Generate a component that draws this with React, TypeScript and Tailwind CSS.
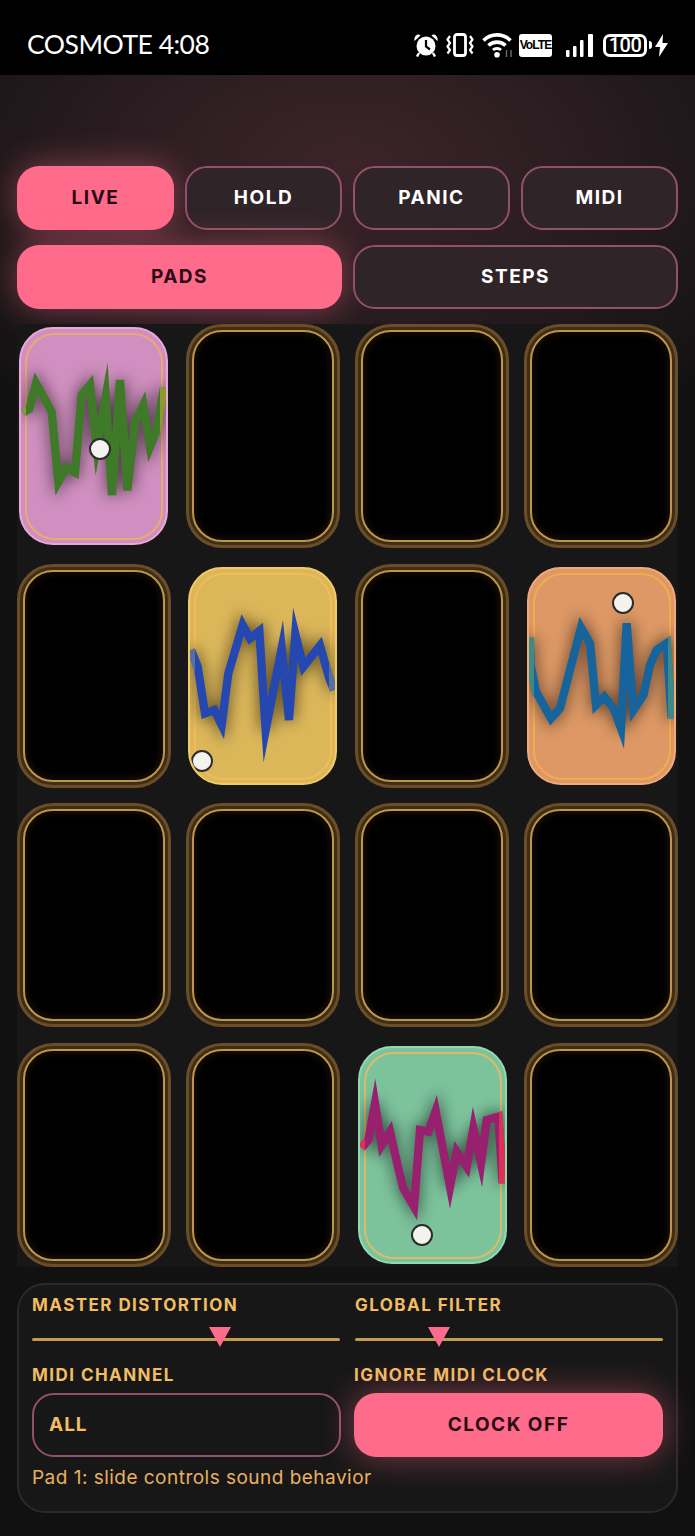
const PINK_GLOW = "shadow-[0_0_34px_rgba(255,107,138,0.45)]";
const LABEL = "text-[17px] leading-[22px] font-bold tracking-[0.085em] text-[#f2bd63]";

type Pad = {
  box: string;
  ring: string;
  wave: string;
  edge: string;
  viewX: number;
  viewY: number;
  points: string;
  knob: string;
};

const pads: Record<number, Pad> = {
  0: {
    box: "ml-[2px] bg-[#d08fc0] border-[#e8a8da]",
    ring: "border-[#eaab70]",
    wave: "#3f7a28",
    edge: "#8c9a30",
    viewX: 57,
    viewY: 36,
    points:
      "70,292 88,282 108,205 155,290 175,500 198,458 225,472 245,240 270,210 290,395 317,245 336,540 360,195 382,526 405,322 430,270 450,395 470,345 492,218",
    knob: "left-[68px] top-[109px]",
  },
  5: {
    box: "ml-[2px] bg-[#dcb75a] border-[#f2ca6a]",
    ring: "border-[#f2ba58]",
    wave: "#2448b0",
    edge: "#5a6ea0",
    viewX: 54,
    viewY: 36,
    points:
      "63,285 83,335 105,475 133,465 155,510 175,355 218,210 240,250 268,228 287,525 335,280 357,495 376,237 400,335 450,272 478,370 492,405",
    knob: "left-[1px] top-[181px]",
  },
  7: {
    box: "ml-[3px] bg-[#dd9865] border-[#f2aa7a]",
    ring: "border-[#f2ac50]",
    wave: "#17649c",
    edge: "#3f8a86",
    viewX: 51,
    viewY: 36,
    points:
      "60,248 62,330 78,410 123,490 150,460 213,218 240,265 258,450 283,425 312,462 333,520 350,205 370,465 400,420 420,330 440,285 470,265 485,490",
    knob: "left-[83px] top-[23px]",
  },
  14: {
    box: "ml-[3px] bg-[#7cc39c] border-[#92dab2]",
    ring: "border-[#dcbc6a]",
    wave: "#98206f",
    edge: "#e03055",
    viewX: 54,
    viewY: 33,
    points:
      "65,338 85,315 105,205 125,330 150,290 175,400 190,460 222,515 240,285 265,290 287,228 330,455 350,350 380,395 400,280 423,385 440,255 475,245 488,445",
    knob: "left-[51px] top-[176px]",
  },
};

function FilledPad({ pad, id }: { pad: Pad; id: string }) {
  return (
    <div className={`relative my-auto h-[218px] w-[149px] overflow-hidden rounded-[34px] border-2 ${pad.box}`}>
      <div className={`absolute top-[4px] right-[3px] bottom-[3px] left-[4px] rounded-[30px] border-2 ${pad.ring}`} />
      <svg className="absolute -left-[2px] -top-[2px] h-[218px] w-[149px]" viewBox={`${pad.viewX} ${pad.viewY} 447 654`}>
        <clipPath id={id}>
          <rect x={pad.viewX} y={pad.viewY} width="21" height="654" />
          <rect x={pad.viewX + 423} y={pad.viewY} width="24" height="654" />
        </clipPath>
        <polyline points={pad.points} fill="none" stroke="#000" strokeOpacity="0.55" strokeWidth="32" className="blur-[22px]" />
        <polyline points={pad.points} fill="none" stroke={pad.wave} strokeWidth="25" strokeMiterlimit="10" />
        <polyline points={pad.points} fill="none" stroke={pad.edge} strokeWidth="25" strokeMiterlimit="10" clipPath={`url(#${id})`} />
      </svg>
      <div className={`absolute h-[22px] w-[22px] rounded-full border-2 border-[#2b2b2b] bg-[#f4f2ee] ${pad.knob}`} />
    </div>
  );
}

function EmptyPad() {
  return (
    <div className="h-full w-full rounded-[36px] border-[3px] border-[#6b4e28] bg-[#3f2d16] p-[3px]">
      <div className="h-full w-full rounded-[30px] border-2 border-[#bc964c] bg-black shadow-[inset_0_0_10px_rgba(255,150,50,0.16)]" />
    </div>
  );
}

function StatusIcons() {
  return (
    <div className="flex items-center">
      <svg width="24" height="24" viewBox="0 0 24 24" className="ml-[2px]" fill="#fff">
        <circle cx="12" cy="13" r="9.5" />
        <path d="M.5 8 6.5 2.5C4 -.5-.5 3 .5 8ZM23.5 8l-6-5.5C20-.5 24.5 3 23.5 8Z" />
        <path d="M5 20 3 23.5M19 20l2 3.5" stroke="#fff" strokeWidth="2.4" />
        <path d="M12 7v6.5l4 3" stroke="#000" strokeWidth="2.2" fill="none" />
      </svg>
      <svg width="28" height="24" viewBox="0 0 28 24" className="ml-[8px]" fill="none" stroke="#fff">
        <rect x="8.5" y="1.5" width="11" height="21" rx="2.5" strokeWidth="2.8" />
        <path d="M4 3 1.5 6.5 4 10 1.5 13.5 4 17 1.5 20.5M24 3l2.5 3.5L24 10l2.5 3.5L24 17l2.5 3.5" strokeWidth="2.2" />
      </svg>
      <svg width="34" height="26" viewBox="0 0 34 26" className="ml-[8px]" fill="none" stroke="#fff" strokeWidth="3.6">
        <path d="M1.5 8.5C9 1 21 1 28.5 8.5M6.5 13.5C11 9 19 9 23.5 13.5" />
        <path d="M11 18c2-2 6-2 8 0" strokeWidth="3" />
        <circle cx="15" cy="22.8" r="2.8" fill="#fff" stroke="none" />
        <path d="M24.5 18v7M29 18v7" stroke="#666" strokeWidth="1.5" />
      </svg>
      <div className="ml-[3px] flex h-[23px] w-[33px] items-center justify-center overflow-hidden rounded-[3px] bg-white font-['Liberation_Sans'] text-[12px] leading-none font-bold tracking-[-0.9px] text-black">
        VoLTE
      </div>
      <svg width="28" height="23" viewBox="0 0 28 23" className="ml-[14px]" fill="#fff">
        <rect x="0" y="16" width="3.5" height="7" rx="1" />
        <rect x="7" y="12" width="3.5" height="11" rx="1" />
        <rect x="14" y="6" width="3.5" height="17" rx="1" />
        <rect x="22" y="0" width="5" height="23" rx="1" />
      </svg>
      <div className="ml-[9px] flex h-[23px] w-[44px] items-center justify-center rounded-[7px] border-[3px] border-white font-['Roboto'] text-[20px] leading-none font-medium tracking-[-0.5px] text-white">
        100
      </div>
      <div className="ml-[2px] h-[8px] w-[3px] rounded-r-sm bg-white" />
      <svg width="13" height="23" viewBox="0 0 13 23" className="ml-[3px]" fill="#fff">
        <path d="M8 0 0 13h5l-1 10 9-14H7.5Z" />
      </svg>
    </div>
  );
}

function Slider({ label, thumb }: { label: string; thumb: string }) {
  return (
    <div>
      <div className={LABEL}>{label}</div>
      <div className="relative mt-[22px] h-[3px] rounded-full bg-[#c49a50]">
        <div
          className={`absolute -top-[11px] h-[20px] w-[22px] bg-[#ff6b8a] drop-shadow-[0_0_6px_rgba(255,107,138,0.8)] [clip-path:polygon(0_0,100%_0,50%_100%)] ${thumb}`}
        />
      </div>
    </div>
  );
}

export default function App() {
  return (
    <div className="flex h-[1536px] w-[695px] flex-col overflow-hidden bg-[#111111] font-['Inter',sans-serif]">
      <div className="flex h-[75px] shrink-0 items-center justify-between bg-black px-[27px] pt-[13px]">
        <div className="font-['Lato'] text-[26.5px] leading-none tracking-[-0.5px] text-white">COSMOTE 4:08</div>
        <div className="pt-[2px]">
          <StatusIcons />
        </div>
      </div>

      <div className="flex flex-1 flex-col bg-[radial-gradient(ellipse_520px_300px_at_50%_90px,#3c2429_0%,#2a1d21_45%,#111111_100%)] px-[17px] pt-[91px]">
        <div className="grid grid-cols-4 gap-x-[11px]">
          <button className={`h-[64px] rounded-[22px] bg-[#ff6b8a] text-[19px] font-bold tracking-[0.08em] text-[#2a0a14] ${PINK_GLOW}`}>LIVE</button>
          {["HOLD", "PANIC", "MIDI"].map((t) => (
            <button key={t} className="h-[64px] rounded-[22px] border-2 border-[#93506c] bg-[#2f2428] text-[19px] font-bold tracking-[0.08em] text-white">
              {t}
            </button>
          ))}
        </div>
        <div className="mt-[15px] grid grid-cols-2 gap-x-[11px]">
          <button className={`h-[64px] rounded-[22px] bg-[#ff6b8a] text-[19px] font-bold tracking-[0.08em] text-[#2a0a14] ${PINK_GLOW}`}>PADS</button>
          <button className="h-[64px] rounded-[22px] border-2 border-[#93506c] bg-[#2f2428] text-[19px] font-bold tracking-[0.08em] text-white">STEPS</button>
        </div>

        <div className="relative mt-[15px] grid grid-cols-4 gap-x-[15px] gap-y-[15.67px] bg-[#171717]">
          {Array.from({ length: 16 }).map((_, i) => (
            <div key={i} className="flex h-[224px] overflow-hidden">
              {pads[i] ? <FilledPad pad={pads[i]} id={`edge-${i}`} /> : <EmptyPad />}
            </div>
          ))}
        </div>

        <div className="mt-[16px] h-[230px] rounded-[28px] border-2 border-[#2a2a2a] bg-[#171717] px-[13px] pt-[9px]">
          <div className="grid grid-cols-2 gap-x-[15px]">
            <Slider label="MASTER DISTORTION" thumb="left-[177px]" />
            <Slider label="GLOBAL FILTER" thumb="left-[73px]" />
          </div>
          <div className="mt-[23px] grid grid-cols-2 gap-x-[13px]">
            <div>
              <div className={LABEL}>MIDI CHANNEL</div>
              <div className="mt-[7px] flex h-[64px] items-center rounded-[22px] border-2 border-[#93506c] px-[15px] text-[19px] font-bold tracking-[0.05em] text-[#f2bd63]">
                ALL
              </div>
            </div>
            <div>
              <div className={LABEL}>IGNORE MIDI CLOCK</div>
              <button className={`mt-[7px] h-[64px] w-full rounded-[22px] bg-[#ff6b8a] text-[19px] font-bold tracking-[0.08em] text-[#2a0a14] ${PINK_GLOW}`}>
                CLOCK OFF
              </button>
            </div>
          </div>
          <div className="mt-[9px] text-[19px] leading-[24px] tracking-[0.025em] text-[#e8b060]">Pad 1: slide controls sound behavior</div>
        </div>
      </div>
    </div>
  );
}
